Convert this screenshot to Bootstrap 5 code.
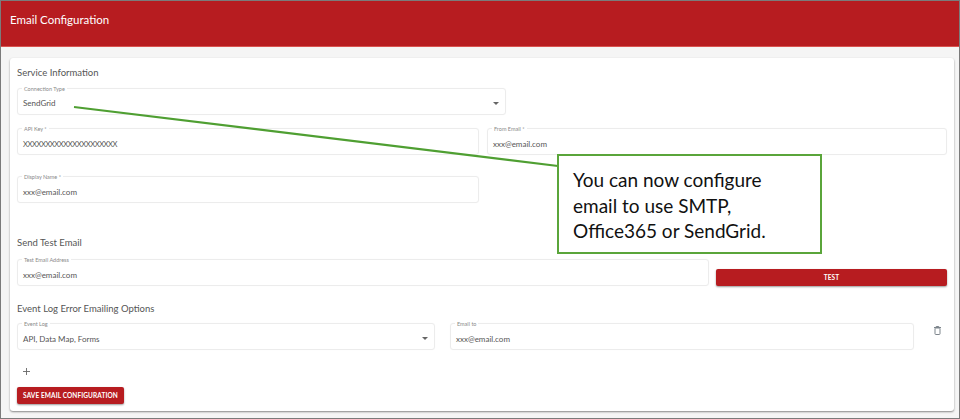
<!doctype html>
<html lang="en">
<head>
<meta charset="utf-8">
<title>Email Configuration</title>
<link href="https://cdn.jsdelivr.net/npm/bootstrap@5.3.0/dist/css/bootstrap.min.css" rel="stylesheet">
<style>
html,body{height:419px;overflow:hidden;background:#fff}
body{font-family:"Lato","Open Sans",sans-serif;color:#555}
.shot-frame{height:419px;border:1px solid #7b7b7b;background:#f5f5f5;position:relative}
.shot-head{height:46px;background:#b71c20;color:#fff;font-size:11.5px;padding:0 9px 8px;border-bottom:1px solid #d9534f}
.shot-panel{margin:11px 5px 0 9px;height:353px;background:#fff;border-radius:3px;box-shadow:0 1px 2px rgba(0,0,0,.45);padding:9px 7px 0 7px}
.sect-title{font-size:9.5px;line-height:12px;margin:0;color:#555;font-weight:400}
.out-field{position:relative;height:27px;border:1px solid #ececec;border-radius:3px;padding:7px 5px 0;font-size:8px;color:#555;box-shadow:0 0 1px rgba(0,0,0,.05);line-height:17px}
.out-label{position:absolute;left:4px;top:-3px;background:#fff;padding:0 2px;font-size:5.5px;line-height:7px;color:#8a8a8a}
.caret-down{width:0;height:0;border-left:3px solid transparent;border-right:3px solid transparent;border-top:3px solid #666;position:absolute;right:6px;top:13px}
.tight-x{letter-spacing:-.45px;font-size:7.6px}
.w-conn{width:489px;padding-top:6px}
.w-half{width:462px}
.w-from{width:460px}
.w-test{width:692px}
.w-tbtn{width:231px}
.w-log{width:418px}
.w-to{width:464px}
.gap-api{gap:8px}
.gap-seven{gap:7px}
.gap-fifteen{gap:15px}
.red-btn{background:#b71c20;color:#fff;font-size:6.5px;font-weight:700;border:0;border-radius:2px;height:17px;padding:0;box-shadow:0 1px 2px rgba(0,0,0,.4);letter-spacing:.1px;line-height:16px}
.red-save{width:107px}
.t-conn{margin-top:9px}
.t-api{margin-top:13px}
.t-disp{margin-top:21px}
.t-send{margin-top:34px}
.t-testrow{margin-top:10px}
.t-evt{margin-top:17px}
.t-logrow{margin-top:8px}
.t-plus{margin-top:17px;height:9px;padding-left:5px;line-height:0}
.t-save{margin-top:11px;line-height:0}
.tbtn-wrap{padding-top:10px;line-height:0}
.bin-wrap{padding-left:20px;padding-top:3px;line-height:0}
.call-line{position:absolute;left:0;top:0;pointer-events:none}
.callout{position:absolute;left:556px;top:153px;width:265px;height:100px;background:#fff;border:2px solid #5aa53a;padding:11px 30px 0 14px;font-family:"Lato","Open Sans",sans-serif;font-size:19px;line-height:25.5px;color:#111}
</style>
</head>
<body>
<div class="shot-frame">
  <div class="shot-head d-flex align-items-center">Email Configuration</div>
  <div class="shot-panel">
    <h6 class="sect-title">Service Information</h6>
    <div class="out-field w-conn t-conn"><span class="out-label">Connection Type</span>SendGrid<span class="caret-down"></span></div>
    <div class="d-flex gap-api t-api">
      <div class="out-field w-half"><span class="out-label">API Key *</span><span class="tight-x">XXXXXXXXXXXXXXXXXXXXX</span></div>
      <div class="out-field w-from"><span class="out-label">From Email *</span>xxx@email.com</div>
    </div>
    <div class="out-field w-half t-disp"><span class="out-label">Display Name *</span>xxx@email.com</div>
    <h6 class="sect-title t-send">Send Test Email</h6>
    <div class="d-flex gap-seven t-testrow">
      <div class="out-field w-test"><span class="out-label">Test Email Address</span>xxx@email.com</div>
      <div class="tbtn-wrap"><button class="btn red-btn w-tbtn" type="button">TEST</button></div>
    </div>
    <h6 class="sect-title t-evt">Event Log Error Emailing Options</h6>
    <div class="d-flex gap-fifteen t-logrow">
      <div class="out-field w-log"><span class="out-label">Event Log</span>API, Data Map, Forms<span class="caret-down"></span></div>
      <div class="d-flex">
        <div class="out-field w-to"><span class="out-label">Email to</span>xxx@email.com</div>
        <div class="bin-wrap"><svg width="7" height="9" viewBox="0 0 7 9" fill="none" stroke="#7d858c" stroke-width="1"><path d="M0 1.5h7M2.2 1.5V.5h2.6v1"/><rect x="1" y="2" width="5" height="6.5" rx=".7"/></svg></div>
      </div>
    </div>
    <div class="t-plus"><svg width="9" height="9" viewBox="0 0 9 9" stroke="#666" stroke-width=".9"><path d="M4.5 1v7M1 4.5h7"/></svg></div>
    <div class="t-save"><button class="btn red-btn red-save" type="button">SAVE EMAIL CONFIGURATION</button></div>
  </div>
  <svg class="call-line" width="958" height="417"><line x1="73" y1="106" x2="557" y2="165" stroke="#4f9f32" stroke-width="2.2"/></svg>
  <div class="callout">You can now configure email to use SMTP, Office365 or SendGrid.</div>
</div>
<script src="https://cdn.jsdelivr.net/npm/bootstrap@5.3.0/dist/js/bootstrap.bundle.min.js"></script>
</body>
</html>
